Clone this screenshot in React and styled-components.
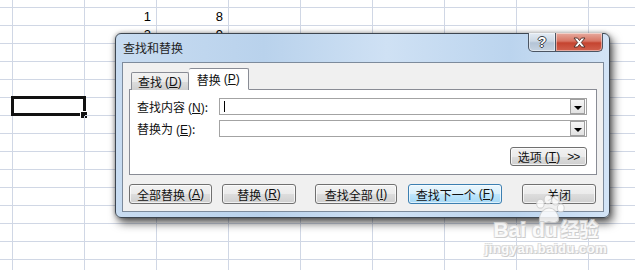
import React from "react";
import styled, { createGlobalStyle } from "styled-components";

const GlobalStyle = createGlobalStyle`
  html, body {
    margin: 0;
    padding: 0;
    background: #ffffff;
    overflow: hidden;
  }
  * {
    box-sizing: border-box;
  }
`;

const Screen = styled.div`
  position: relative;
  width: 635px;
  height: 270px;
  overflow: hidden;
  font-family: "Noto Sans CJK SC", "Liberation Sans", sans-serif;
`;

const Sheet = styled.div`
  display: grid;
  grid-template-columns: 13px repeat(9, 72px);
  grid-template-rows: 8px repeat(15, 18px);
`;

const Cell = styled.div`
  position: relative;
  border-right: 1px solid #d0d7e5;
  border-bottom: 1px solid #d0d7e5;
  font-family: "Liberation Sans", Arial, sans-serif;
  font-size: 13px;
  line-height: 18px;
  color: #000;
  text-align: right;
  padding-right: 5px;

  ${(p) =>
    p.$selected &&
    `
    &::before {
      content: "";
      position: absolute;
      left: -2px;
      top: -2px;
      right: -2px;
      bottom: -1px;
      border: 3px solid #111;
    }
    &::after {
      content: "";
      position: absolute;
      right: -4px;
      bottom: -4px;
      width: 6px;
      height: 6px;
      background: #111;
      border: 1px solid #fff;
    }
  `}
`;

/* ---------- dialog ---------- */

const Dialog = styled.div`
  position: absolute;
  left: 115px;
  top: 33px;
  width: 495px;
  height: 185px;
  display: flex;
  flex-direction: column;
  border: 1px solid #3d4650;
  border-radius: 6px;
  background: linear-gradient(
    90deg,
    #c8dcf1 0%,
    #b9d2ec 30%,
    #cfe1f4 55%,
    #bbd4ee 80%,
    #d3e4f6 100%
  );
  box-shadow: 3px 5px 10px rgba(0, 0, 0, 0.65), 0 0 4px rgba(0, 0, 0, 0.35);
`;

const TitleBar = styled.div`
  height: 28px;
  display: flex;
  align-items: flex-start;
  padding-left: 7px;
`;

const Title = styled.span`
  font-size: 12px;
  line-height: 28px;
  color: #1e1e1e;
`;

const CaptionButtons = styled.div`
  margin-left: auto;
  margin-right: 6px;
  margin-top: -1px;
  display: flex;
`;

const CaptionButton = styled.div`
  width: ${(p) => p.$w}px;
  height: 19px;
  display: flex;
  align-items: center;
  justify-content: center;
  border: 1px solid #4b5563;
  border-top: none;
  border-left: ${(p) => (p.$first ? "1px solid #4b5563" : "none")};
  border-radius: ${(p) => (p.$first ? "0 0 0 5px" : "0 0 5px 0")};
  background: ${(p) =>
    p.$close
      ? "linear-gradient(180deg, #e7ab9f 0%, #d87564 45%, #c54430 55%, #d2614e 100%)"
      : "linear-gradient(180deg, #e3ebf3 0%, #ccd8e5 45%, #b4c4d6 55%, #c6d3e1 100%)"};
  box-shadow: inset 0 0 0 1px rgba(255, 255, 255, 0.45);
`;

const HelpGlyph = styled.span`
  font-family: "Liberation Sans", Arial, sans-serif;
  font-weight: bold;
  font-size: 14px;
  line-height: 14px;
  color: #fff;
  text-shadow: 1px 0 0 #3a3f47, -1px 0 0 #3a3f47, 0 1px 0 #3a3f47,
    0 -1px 0 #3a3f47;
`;

const Client = styled.div`
  flex: 1;
  margin: 0 5px 5px 6px;
  background: #f0f0f0;
  border: 1px solid #7d8b9c;
  padding: 5px 6px 0 6px;
  display: flex;
  flex-direction: column;
`;

const TabRow = styled.div`
  display: flex;
  align-items: flex-end;
  height: 22px;
  margin-bottom: -1px;
  padding-left: 2px;
  position: relative;
  z-index: 1;
`;

const Tab = styled.div`
  height: ${(p) => (p.$active ? 22 : 18)}px;
  padding: 0 ${(p) => (p.$active ? 8 : 6)}px;
  display: flex;
  align-items: center;
  font-size: 12px;
  color: #111;
  border: 1px solid #898c95;
  border-bottom: ${(p) => (p.$active ? "1px solid #fff" : "none")};
  border-left: ${(p) => (p.$active ? "none" : "1px solid #898c95")};
  background: ${(p) =>
    p.$active
      ? "#ffffff"
      : "linear-gradient(180deg, #f2f2f2 0%, #ebebeb 50%, #dddddd 51%, #cfcfcf 100%)"};
  border-radius: 2px 2px 0 0;
`;

const Mn = styled.span`
  font-family: "Liberation Sans", Arial, sans-serif;
  font-size: 12px;
  margin-left: 3px;

  u {
    text-underline-offset: 1px;
  }
`;

const Panel = styled.div`
  height: 86px;
  background: #ffffff;
  border: 1px solid #898c95;
  padding: 8px 9px 0 7px;
  display: flex;
  flex-direction: column;
`;

const FieldRow = styled.div`
  display: flex;
  align-items: center;
  height: 17px;
  margin-top: ${(p) => p.$gap || 0}px;
`;

const Label = styled.div`
  width: 82px;
  font-size: 12px;
  color: #111;
  white-space: nowrap;
`;

const Combo = styled.div`
  flex: 1;
  height: 17px;
  border: 1px solid #a3a3a3;
  background: #fff;
  display: flex;
  align-items: center;
  padding: 1px;
`;

const Caret = styled.div`
  width: 1px;
  height: 11px;
  background: #000;
  margin-left: 3px;
`;

const DropButton = styled.div`
  margin-left: auto;
  width: 15px;
  height: 15px;
  border: 1px solid #a0a0a0;
  background: linear-gradient(180deg, #f7f7f7 0%, #e2e2e2 100%);
  display: flex;
  align-items: center;
  justify-content: center;
`;

const Arrow = styled.div`
  width: 0;
  height: 0;
  border-left: 4px solid transparent;
  border-right: 4px solid transparent;
  border-top: 4px solid #000;
  margin-top: 2px;
`;

const OptionsRow = styled.div`
  display: flex;
  justify-content: flex-end;
  margin-top: 10px;
`;

const Button = styled.div`
  width: ${(p) => p.$w}px;
  height: ${(p) => p.$h || 20}px;
  margin-left: ${(p) => p.$gap || 0}px;
  display: flex;
  align-items: center;
  justify-content: center;
  font-size: 12px;
  color: #111;
  white-space: nowrap;
  border: 1px solid ${(p) => (p.$focus ? "#3c7fb1" : "#707070")};
  border-radius: 3px;
  background: ${(p) =>
    p.$focus
      ? "linear-gradient(180deg, #eaf6fd 0%, #d9f0fc 50%, #bee6fd 51%, #a7d9f5 100%)"
      : "linear-gradient(180deg, #f2f2f2 0%, #ebebeb 50%, #dddddd 51%, #cfcfcf 100%)"};
  box-shadow: inset 0 0 0 1px
    ${(p) => (p.$focus ? "rgba(255,255,255,0.6)" : "rgba(255,255,255,0.7)")};
`;

const Chevron = styled.span`
  font-family: "Liberation Sans", Arial, sans-serif;
  font-size: 12px;
  margin-left: 7px;
  letter-spacing: -1px;
`;

const ButtonRow = styled.div`
  display: flex;
  margin-top: 9px;
`;

/* ---------- watermark ---------- */

const Watermark = styled.div`
  position: absolute;
  left: 484px;
  top: 194px;
  width: 124px;
  display: flex;
  flex-direction: column;
  align-items: center;
  opacity: 0.85;
  pointer-events: none;
`;

const Paw = styled.svg`
  margin-left: 6px;
  margin-bottom: -7px;
`;

const MarkLine = styled.div`
  display: flex;
  align-items: baseline;
  font-family: "Liberation Sans", Arial, sans-serif;
  font-weight: bold;
  font-size: ${(p) => p.$size}px;
  line-height: ${(p) => p.$size + 2}px;
  color: #fbfbfb;
  letter-spacing: ${(p) => p.$spacing || 0}px;
  text-shadow: 1px 1px 0 #c4c4c4, -1px -1px 0 #d8d8d8, 1px -1px 0 #d8d8d8,
    -1px 1px 0 #d8d8d8;
`;

const MarkCJK = styled.span`
  font-family: "Noto Sans CJK SC", sans-serif;
  font-size: 19px;
  margin-left: 3px;
`;

const rows = 16;
const cols = 10;

const values = {
  "1-2": "1",
  "1-3": "8",
  "2-2": "2",
  "2-3": "9",
};

function M({ k }) {
  return (
    <Mn>
      (<u>{k}</u>)
    </Mn>
  );
}

export default function App() {
  const cells = [];
  for (let r = 0; r < rows; r++) {
    for (let c = 0; c < cols; c++) {
      cells.push(
        <Cell key={r + "-" + c} $selected={r === 6 && c === 1}>
          {values[r + "-" + c]}
        </Cell>
      );
    }
  }

  return (
    <Screen>
      <GlobalStyle />
      <Sheet>{cells}</Sheet>

      <Dialog>
        <TitleBar>
          <Title>查找和替换</Title>
          <CaptionButtons>
            <CaptionButton $w={28} $first>
              <HelpGlyph>?</HelpGlyph>
            </CaptionButton>
            <CaptionButton $w={47} $close>
              <svg width="13" height="11" viewBox="0 0 13 11">
                <path
                  d="M1 1 H4.5 L6.5 3.6 L8.5 1 H12 L8.3 5.5 L12 10 H8.5 L6.5 7.4 L4.5 10 H1 L4.7 5.5 Z"
                  fill="#ffffff"
                  stroke="#4a2a26"
                  strokeWidth="0.9"
                  strokeLinejoin="round"
                />
              </svg>
            </CaptionButton>
          </CaptionButtons>
        </TitleBar>

        <Client>
          <TabRow>
            <Tab>
              查找<M k="D" />
            </Tab>
            <Tab $active>
              替换<M k="P" />
            </Tab>
          </TabRow>

          <Panel>
            <FieldRow>
              <Label>
                查找内容<M k="N" />:
              </Label>
              <Combo>
                <Caret />
                <DropButton>
                  <Arrow />
                </DropButton>
              </Combo>
            </FieldRow>
            <FieldRow $gap={5}>
              <Label>
                替换为<M k="E" />:
              </Label>
              <Combo>
                <DropButton>
                  <Arrow />
                </DropButton>
              </Combo>
            </FieldRow>
            <OptionsRow>
              <Button $w={77} $h={19}>
                选项<M k="T" />
                <Chevron>&gt;&gt;</Chevron>
              </Button>
            </OptionsRow>
          </Panel>

          <ButtonRow>
            <Button $w={83}>
              全部替换<M k="A" />
            </Button>
            <Button $w={74} $gap={10}>
              替换<M k="R" />
            </Button>
            <Button $w={82} $gap={19}>
              查找全部<M k="I" />
            </Button>
            <Button $w={94} $gap={11} $focus>
              查找下一个<M k="F" />
            </Button>
            <Button $w={74} $gap={20}>
              关闭
            </Button>
          </ButtonRow>
        </Client>
      </Dialog>

      <Watermark>
        <Paw width="38" height="30" viewBox="0 0 34 28">
          <g fill="#fdfdfd" stroke="#cfcfcf" strokeWidth="1">
            <ellipse cx="9" cy="9" rx="3.5" ry="4.2" />
            <ellipse cx="16" cy="5" rx="3.5" ry="4.2" />
            <ellipse cx="23" cy="6" rx="3.5" ry="4.2" />
            <ellipse cx="28" cy="13" rx="3.2" ry="3.8" />
            <path d="M8 24 C8 17 13 13 17 13 C22 13 26 18 26 23 C26 27 21 27 17 26 C13 27 8 28 8 24 Z" />
          </g>
        </Paw>
        <MarkLine $size={21}>
          Bai du<MarkCJK>经验</MarkCJK>
        </MarkLine>
        <MarkLine $size={13} $spacing={0.5}>
          jingyan.baidu.com
        </MarkLine>
      </Watermark>
    </Screen>
  );
}
